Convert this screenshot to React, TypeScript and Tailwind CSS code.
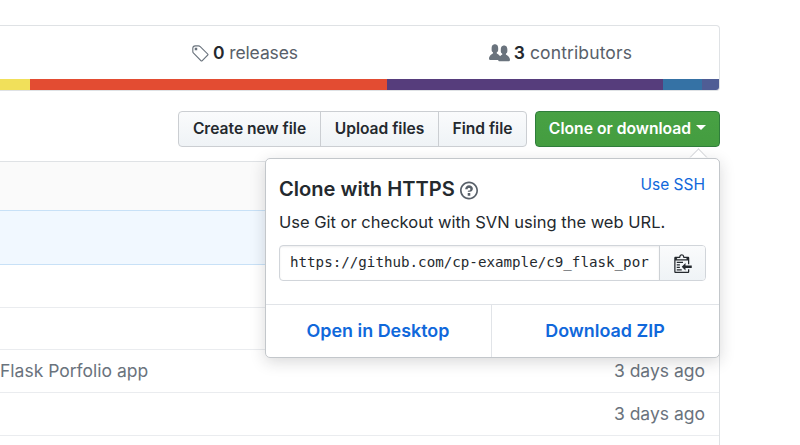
import type { ReactNode } from "react";

type IconProps = { className?: string };

function TagIcon({ className }: IconProps) {
  return (
    <svg viewBox="0 0 14 16" className={className} fill="currentColor" aria-hidden="true">
      <path fillRule="evenodd" d="M7.685 1.72a2.49 2.49 0 0 0-1.76-.726H3.48A2.5 2.5 0 0 0 .994 3.48v2.456c0 .656.269 1.292.726 1.76l6.024 6.024a.99.99 0 0 0 1.402 0l4.563-4.563a.99.99 0 0 0 0-1.402L7.685 1.72zM2.366 7.048a1.54 1.54 0 0 1-.467-1.123V3.48c0-.874.716-1.58 1.58-1.58h2.456c.418 0 .825.159 1.123.467l6.104 6.094-4.702 4.702-6.094-6.114zm.626-4.066h1.989v1.989H2.982V2.982h.01z" />
    </svg>
  );
}

function PeopleIcon({ className }: IconProps) {
  return (
    <svg viewBox="0 0 16 16" className={className} fill="currentColor" aria-hidden="true">
      <path fillRule="evenodd" d="M16 12.999c0 .439-.45 1-1 1H7.995c-.539 0-.994-.447-.995-.999H1c-.54 0-1-.561-1-1 0-2.634 3-4 3-4s.229-.409 0-1c-.841-.621-1.058-.59-1-3 .058-2.419 1.367-3 2.5-3s2.442.58 2.5 3c.058 2.41-.159 2.379-1 3-.229.59 0 1 0 1s1.549.711 2.42 2.088C9.196 9.369 10 8.999 10 8.999s.229-.409 0-1c-.841-.62-1.058-.59-1-3 .058-2.419 1.367-3 2.5-3s2.437.581 2.495 3c.059 2.41-.158 2.38-1 3-.229.59 0 1 0 1s3.005 1.366 3.005 4z" />
    </svg>
  );
}

function QuestionIcon({ className }: IconProps) {
  return (
    <svg viewBox="0 0 14 16" className={className} fill="currentColor" aria-hidden="true">
      <path fillRule="evenodd" d="M6 10h2v2H6v-2zm4-3.5C10 8.64 8 9 8 9H6c0-.55.45-1 1-1h.5c.28 0 .5-.22.5-.5v-1c0-.28-.22-.5-.5-.5h-1c-.28 0-.5.22-.5.5V7H4c0-1.5 1.5-3 3-3s3 1 3 2.5zM7 2.3c3.14 0 5.7 2.56 5.7 5.7s-2.56 5.7-5.7 5.7A5.71 5.71 0 0 1 1.3 8c0-3.14 2.56-5.7 5.7-5.7zM7 1C3.14 1 0 4.14 0 8s3.14 7 7 7 7-3.14 7-7-3.14-7-7-7z" />
    </svg>
  );
}

function ClippyIcon({ className }: IconProps) {
  return (
    <svg viewBox="0 0 14 16" className={className} fill="currentColor" aria-hidden="true">
      <path fillRule="evenodd" d="M2 13h4v1H2v-1zm5-6H2v1h5V7zm2 3V8l-3 3 3 3v-2h5v-2H9zM4.5 9H2v1h2.5V9zM2 12h2.5v-1H2v1zm9 1h1v2c-.02.28-.11.52-.3.7-.19.18-.42.28-.7.3H1c-.55 0-1-.45-1-1V4c0-.55.45-1 1-1h3c0-1.11.89-2 2-2 1.11 0 2 .89 2 2h3c.55 0 1 .45 1 1v5h-1V6H1v9h10v-2zM2 5h8c0-.55-.45-1-1-1H8c-.55 0-1-.45-1-1s-.45-1-1-1-1 .45-1 1-.45 1-1 1H3c-.55 0-1 .45-1 1z" />
    </svg>
  );
}

function GroupButton({ children, className }: { children: ReactNode; className: string }) {
  return (
    <button
      className={`h-9 border border-[#cbced2] bg-linear-to-b from-[#fafbfc] to-[#eff3f6] text-[15.6px] font-semibold whitespace-nowrap ${className}`}
    >
      {children}
    </button>
  );
}

function StatsBox() {
  return (
    <section className="mt-[25px] h-[66px] w-[720px] shrink-0 overflow-hidden rounded-r border-y border-r border-[#dfe2e5]">
      <div className="flex h-[53px] items-center pt-[2px] text-[17.5px] text-[#586069]">
        <div className="flex w-[298px] items-center justify-end">
          <TagIcon className="mr-1 h-5 w-[17.5px] text-[#6a737d]" />
          <span className="tracking-[-0.1px] whitespace-nowrap">
            <b className="font-semibold text-[#24292e]">0</b> releases
          </span>
        </div>
        <div className="flex w-[334px] items-center justify-end">
          <PeopleIcon className="mr-1 size-[21px] text-[#6a737d]" />
          <span className="tracking-[0.12px] whitespace-nowrap">
            <b className="font-semibold text-[#24292e]">3</b> contributors
          </span>
        </div>
      </div>
      <div className="flex h-[11px]">
        <span className="w-[30px] bg-[#f1e05a]" />
        <span className="w-[357px] bg-[#e34c32]" />
        <span className="w-[276px] bg-[#563d7c]" />
        <span className="w-[39px] bg-[#3572a5]" />
        <span className="flex-1 bg-[#4f5d95]" />
      </div>
    </section>
  );
}

function ClonePopover() {
  return (
    <div className="absolute top-[47px] right-0 flex h-[200px] w-[455px] flex-col rounded-[5px] border border-[#c3c7cb] bg-white shadow-[0_4px_15px_rgba(27,31,35,0.17)]">
      <span className="absolute -top-[8px] right-[14px] size-[13px] rotate-45 border-t border-l border-[#d5d7da] bg-white [clip-path:polygon(-10%_-10%,110%_-10%,-10%_110%)]" />
      <div className="flex h-[145px] flex-col pr-[14px] pl-[13px]">
        <div className="flex h-[44px] items-end justify-between">
          <h4 className="flex items-center gap-[5px] text-[20.1px] leading-7 font-semibold">
            Clone with HTTPS
            <QuestionIcon className="mt-0.5 h-[21px] w-[18px] text-[#586069]" />
          </h4>
          <a className="mb-1.5 text-[15.5px] leading-6 text-[#1068db]">Use SSH</a>
        </div>
        <p className="mt-[7px] text-[16.5px] leading-6 whitespace-nowrap">Use Git or checkout with SVN using the web URL.</p>
        <div className="mt-[11px] flex h-9 w-[427px] overflow-hidden rounded-[4px] border border-[#d1d5da]">
          <div className="flex w-[379px] shrink-0 items-center overflow-hidden pl-[10px] font-['DejaVu_Sans_Mono',monospace] text-[14.2px] whitespace-nowrap shadow-[inset_0_1px_2px_rgba(27,31,35,0.075)]">
            https://github.com/cp-example/c9_flask_por
          </div>
          <button className="flex flex-1 items-center justify-center border-l border-[#cdd1d5] bg-linear-to-b from-[#fafbfc] to-[#eff3f6]">
            <ClippyIcon className="h-5 w-[18px]" />
          </button>
        </div>
      </div>
      <div className="flex flex-1 border-t border-[#e1e4e8] text-[17.9px] font-semibold text-[#1068db]">
        <a className="flex w-[226px] items-center justify-center border-r border-[#e1e4e8] pr-px">Open in Desktop</a>
        <a className="flex flex-1 items-center justify-center pr-px">Download ZIP</a>
      </div>
    </div>
  );
}

function Toolbar() {
  return (
    <div className="relative z-10 mt-5 flex h-[50px] w-[720px] shrink-0 items-start justify-end">
      <div className="flex">
        <GroupButton className="w-[143px] rounded-l-[4px]">Create new file</GroupButton>
        <GroupButton className="-ml-px w-[119px]">Upload files</GroupButton>
        <GroupButton className="-ml-px w-[89px] rounded-r-[4px]">Find file</GroupButton>
      </div>
      <button className="ml-2 flex h-9 w-[185px] items-center justify-center rounded-[4px] border border-[#2f7d3b] bg-linear-to-b from-[#48a144] to-[#449d40] text-[15.7px] font-semibold whitespace-nowrap text-white">
        Clone or download
        <span className="mb-[3px] ml-[5px] border-x-[5px] border-t-[5px] border-x-transparent border-t-white" />
      </button>
      <ClonePopover />
    </div>
  );
}

const rows = [
  { message: "", age: "", height: "h-[43px]" },
  { message: "", age: "", height: "h-[42px]" },
  { message: "Flask Porfolio app", age: "3 days ago", height: "h-[43px]" },
  { message: "", age: "3 days ago", height: "h-[43px]" },
  { message: "", age: "", height: "h-[43px]" },
];

function FileList() {
  return (
    <section className="w-[720px] shrink-0 border-t border-r border-[#dfe2e5] text-[17.5px] text-[#6a737d]">
      <div className="h-[48px] bg-[#fafafa]" />
      <div className="h-[55px] border-y border-[#c8e1f7] bg-[#f1f8ff]" />
      {rows.map((row, i) => (
        <div key={i} className={`flex items-center justify-between border-b border-[#eaecef] pr-[14px] whitespace-nowrap ${row.height}`}>
          <span>{row.message}</span>
          <span>{row.age}</span>
        </div>
      ))}
    </section>
  );
}

export default function App() {
  return (
    <main className="flex h-[445px] w-[800px] flex-col overflow-hidden bg-white font-[Inter,sans-serif] text-[#24292e]">
      <StatsBox />
      <Toolbar />
      <FileList />
    </main>
  );
}
